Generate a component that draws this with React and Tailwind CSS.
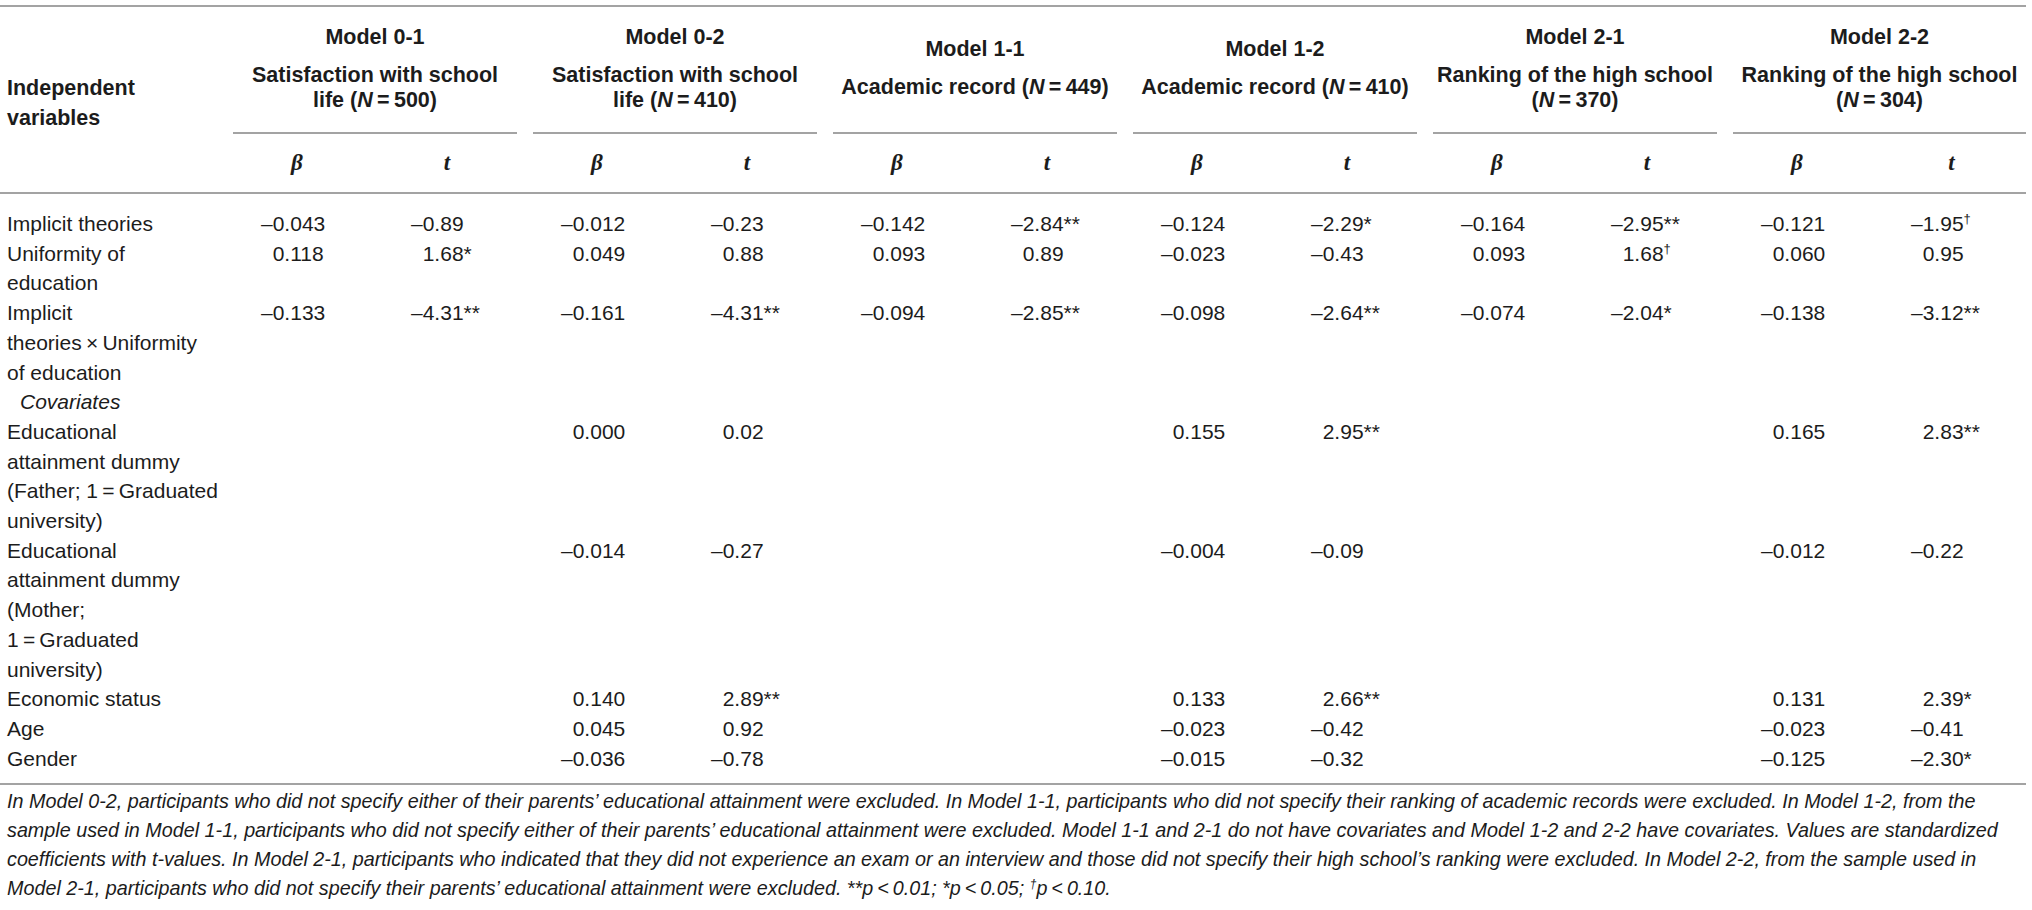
import React from "react";

const TS = "\u2009";

function NEq({ n }) {
  return (
    <>
      <span className="italic">N</span>
      {TS}={TS}
      {n}
    </>
  );
}

const groups = [
  { model: "Model 0-1", lines: [<>Satisfaction with school</>, <>life (<NEq n="500" />)</>] },
  { model: "Model 0-2", lines: [<>Satisfaction with school</>, <>life (<NEq n="410" />)</>] },
  { model: "Model 1-1", lines: [<>Academic record (<NEq n="449" />)</>] },
  { model: "Model 1-2", lines: [<>Academic record (<NEq n="410" />)</>] },
  { model: "Model 2-1", lines: [<>Ranking of the high school</>, <>(<NEq n="370" />)</>] },
  { model: "Model 2-2", lines: [<>Ranking of the high school</>, <>(<NEq n="304" />)</>] },
];

const rows = [
  {
    label: ["Implicit theories"],
    vals: ["–0.043", "–0.89", "–0.012", "–0.23", "–0.142", "–2.84**", "–0.124", "–2.29*", "–0.164", "–2.95**", "–0.121", "–1.95†"],
  },
  {
    label: ["Uniformity of", "education"],
    vals: ["0.118", "1.68*", "0.049", "0.88", "0.093", "0.89", "–0.023", "–0.43", "0.093", "1.68†", "0.060", "0.95"],
  },
  {
    label: ["Implicit", `theories${TS}×${TS}Uniformity`, "of education"],
    vals: ["–0.133", "–4.31**", "–0.161", "–4.31**", "–0.094", "–2.85**", "–0.098", "–2.64**", "–0.074", "–2.04*", "–0.138", "–3.12**"],
  },
  { label: ["Covariates"], italic: true, vals: [] },
  {
    label: ["Educational", "attainment dummy", `(Father; 1${TS}=${TS}Graduated`, "university)"],
    vals: ["", "", "0.000", "0.02", "", "", "0.155", "2.95**", "", "", "0.165", "2.83**"],
  },
  {
    label: ["Educational", "attainment dummy", "(Mother;", `1${TS}=${TS}Graduated`, "university)"],
    vals: ["", "", "–0.014", "–0.27", "", "", "–0.004", "–0.09", "", "", "–0.012", "–0.22"],
  },
  {
    label: ["Economic status"],
    vals: ["", "", "0.140", "2.89**", "", "", "0.133", "2.66**", "", "", "0.131", "2.39*"],
  },
  {
    label: ["Age"],
    vals: ["", "", "0.045", "0.92", "", "", "–0.023", "–0.42", "", "", "–0.023", "–0.41"],
  },
  {
    label: ["Gender"],
    vals: ["", "", "–0.036", "–0.78", "", "", "–0.015", "–0.32", "", "", "–0.125", "–2.30*"],
  },
];

function Val({ v }) {
  if (!v) return null;
  const neg = v.startsWith("–");
  const body = neg ? v.slice(1) : v;
  const dagger = body.endsWith("†");
  const main = dagger ? body.slice(0, -1) : body;
  return (
    <span className="whitespace-nowrap">
      <span className={neg ? "" : "invisible"}>–</span>
      {main}
      {dagger && <span className="relative -top-[8px] text-[13px] leading-none">†</span>}
    </span>
  );
}

const cols = "grid grid-cols-[217px_repeat(11,150px)_159px]";
const rule = "h-[2px] bg-[#a3a3a3]";

export default function App() {
  return (
    <div className="w-[2032px] h-[910px] bg-white text-[#1c1c1c] font-['Liberation_Sans',Arial,sans-serif] pt-[5px] overflow-hidden">
      <div className="w-[2026px]">
        <div className={rule} />
        {/* header */}
        <div className={`${cols} grid-rows-[127px_58px]`}>
          <div className="row-span-2 flex flex-col justify-center pl-[7px] pt-[9px] font-bold text-[21.5px] leading-[29.7px]">
            <div>Independent</div>
            <div>variables</div>
          </div>
          {groups.map((g) => (
            <div
              key={g.model}
              className="col-span-2 ml-[16px] border-b-2 border-[#a3a3a3] flex flex-col items-center justify-center font-bold text-[21.5px] leading-[25px] pb-[2px]"
            >
              <div className="mb-[13px] whitespace-nowrap">{g.model}</div>
              {g.lines.map((l, i) => (
                <div key={i} className="whitespace-nowrap">
                  {l}
                </div>
              ))}
            </div>
          ))}
          {groups.map((g) => (
            <React.Fragment key={g.model + "bt"}>
              <div className="flex items-center justify-center pl-[10px] font-['Liberation_Serif',serif] font-bold italic text-[23px]">
                β
              </div>
              <div className="flex items-center justify-center pl-[10px] font-['Liberation_Serif',serif] font-bold italic text-[23px]">
                t
              </div>
            </React.Fragment>
          ))}
        </div>
        <div className={rule} />
        {/* body */}
        <div className={`${cols} pt-[15px] pb-[10px] text-[21px] leading-[29.7px]`}>
          {rows.map((r, ri) => (
            <React.Fragment key={ri}>
              <div className={r.italic ? "italic pl-[20px]" : "pl-[7px]"}>
                {r.label.map((l, i) => (
                  <div key={i} className="whitespace-nowrap">
                    {l}
                  </div>
                ))}
              </div>
              {Array.from({ length: 12 }).map((_, ci) => (
                <div key={ci} className="pl-[44px]">
                  <Val v={r.vals[ci]} />
                </div>
              ))}
            </React.Fragment>
          ))}
        </div>
        <div className={rule} />
        {/* footnote */}
        <div className="pt-[2px] pl-[7px] italic text-[19.75px] leading-[29px] whitespace-nowrap">
          <div>
            In Model 0-2, participants who did not specify either of their parents’ educational attainment were excluded. In Model 1-1, participants who did not specify their ranking of academic records were excluded. In Model 1-2, from the
          </div>
          <div>
            sample used in Model 1-1, participants who did not specify either of their parents’ educational attainment were excluded. Model 1-1 and 2-1 do not have covariates and Model 1-2 and 2-2 have covariates. Values are standardized
          </div>
          <div>
            coefficients with t-values. In Model 2-1, participants who indicated that they did not experience an exam or an interview and those did not specify their high school’s ranking were excluded. In Model 2-2, from the sample used in
          </div>
          <div>
            Model 2-1, participants who did not specify their parents’ educational attainment were excluded. **p{TS}&lt;{TS}0.01; *p{TS}&lt;{TS}0.05;{" "}
            <span className="relative -top-[7px] text-[12px] leading-none">†</span>p{TS}&lt;{TS}0.10.
          </div>
        </div>
      </div>
    </div>
  );
}
